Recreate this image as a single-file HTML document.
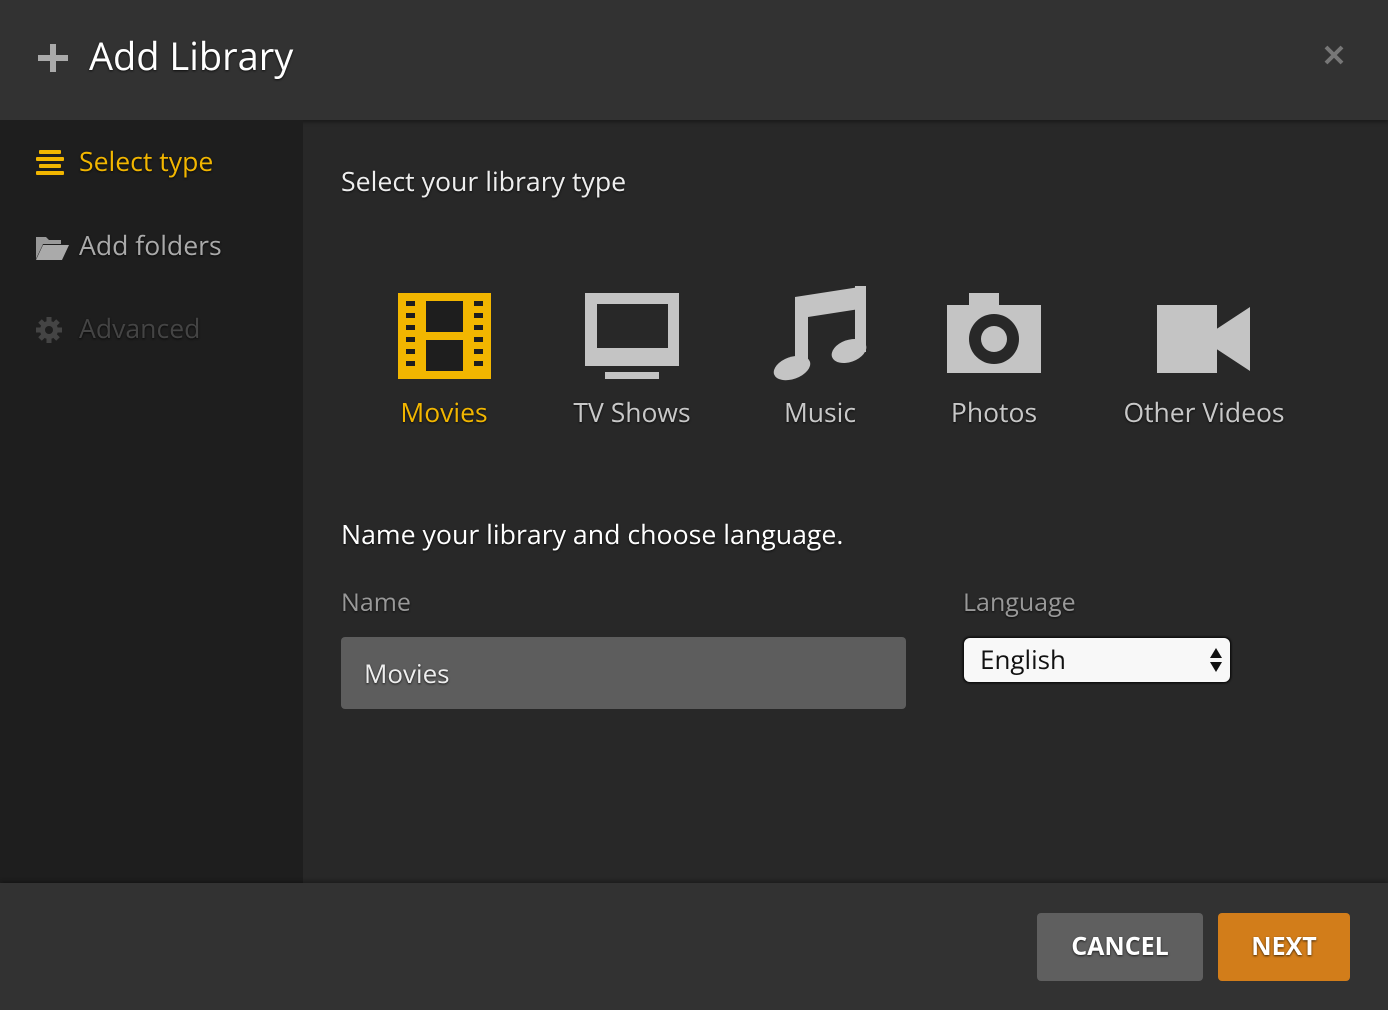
<!DOCTYPE html>
<html><head><meta charset="utf-8"><style>
*{margin:0;padding:0;box-sizing:border-box}
body{width:1388px;height:1010px;background:#282828;font-family:"Open Sans","DejaVu Sans","Liberation Sans",sans-serif;position:relative;overflow:hidden;text-shadow:0 1px 2px rgba(0,0,0,.7)}
.a{position:absolute;white-space:nowrap;line-height:1}
#hdr{position:absolute;left:0;top:0;width:1388px;height:120px;background:#323232;box-shadow:0 2px 4px rgba(0,0,0,.4)}
#side{position:absolute;left:0;top:120px;width:303px;height:763px;background:#1e1e1e}
#ftr{position:absolute;left:0;top:883px;width:1388px;height:127px;background:#323232;box-shadow:0 -2px 4px rgba(0,0,0,.3)}
.lbl{position:absolute;top:399px;font-size:26.5px;color:#c8c8c8;transform:translateX(-50%);white-space:nowrap;line-height:1}
svg{position:absolute}
</style></head><body>
<div id="hdr"></div><div id="side"></div><div id="ftr"></div>
<svg style="left:38px;top:44px" width="30" height="28"><rect x="12" y="0" width="6" height="28" fill="#aaa"/><rect x="0" y="11" width="30" height="6" fill="#aaa"/></svg>
<div class="a" style="left:89px;top:37px;font-size:38px;color:#fff">Add Library</div>
<svg style="left:1324px;top:45px" width="20" height="20"><path d="M2 2L18 18M18 2L2 18" stroke="#777" stroke-width="4"/></svg>

<svg style="left:36px;top:150px" width="28" height="26"><g fill="#f2b600"><rect x="3" y="0" width="22" height="4" rx="1"/><rect x="0" y="7" width="28" height="4" rx="1"/><rect x="3" y="14" width="22" height="4" rx="1"/><rect x="0" y="21" width="28" height="4" rx="1"/></g></svg>
<div class="a" style="left:79px;top:148px;font-size:26.6px;color:#f2b600">Select type</div>
<svg style="left:35px;top:233px" width="34" height="28"><path d="M1 4h10l3 3h12v4H8L1 26z" fill="#999"/><path d="M8 12h26l-7 15H1z" fill="#aaa"/></svg>
<div class="a" style="left:79px;top:232px;font-size:26.6px;color:#aaa">Add folders</div>
<svg style="left:35px;top:316px" width="28" height="28"><g fill="#444"><circle cx="14" cy="14" r="9"/><g stroke="#444" stroke-width="5"><path d="M14 1v26M1 14h26M5 5l18 18M23 5L5 23"/></g></g><circle cx="14" cy="14" r="4" fill="#1e1e1e"/></svg>
<div class="a" style="left:79px;top:315px;font-size:26.6px;color:#444">Advanced</div>

<div class="a" style="left:341px;top:168px;font-size:26.7px;color:#eee">Select your library type</div>

<svg style="left:398px;top:293px" width="93" height="86"><rect width="93" height="86" fill="#f2b600"/><g fill="#1e1e1e"><rect x="28" y="8" width="37" height="31"/><rect x="28" y="47" width="37" height="31"/><rect x="8" y="8" width="9" height="5"/><rect x="8" y="20" width="9" height="5"/><rect x="8" y="32" width="9" height="5"/><rect x="8" y="44" width="9" height="5"/><rect x="8" y="56" width="9" height="5"/><rect x="8" y="68" width="9" height="5"/><rect x="76" y="8" width="9" height="5"/><rect x="76" y="20" width="9" height="5"/><rect x="76" y="32" width="9" height="5"/><rect x="76" y="44" width="9" height="5"/><rect x="76" y="56" width="9" height="5"/><rect x="76" y="68" width="9" height="5"/></g></svg>
<svg style="left:585px;top:293px" width="94" height="86"><rect width="94" height="73" fill="#c4c4c4"/><rect x="12" y="11" width="71" height="44" fill="#282828"/><rect x="20" y="79" width="54" height="7" fill="#c4c4c4"/></svg>
<svg style="left:773px;top:286px" width="96" height="96"><g fill="#c4c4c4"><path d="M22 11L93 0V22L35 31Z"/><rect x="22" y="11" width="13" height="72"/><rect x="82" y="0" width="11" height="66"/><ellipse cx="19" cy="82" rx="19" ry="11" transform="rotate(-20 19 82)"/><ellipse cx="76" cy="65" rx="18" ry="11" transform="rotate(-20 76 65)"/></g></svg>
<svg style="left:947px;top:293px" width="94" height="80"><path d="M22 0h30v12h42v68H0V12h22z" fill="#c4c4c4"/><circle cx="47" cy="46" r="25" fill="#282828"/><circle cx="47" cy="46" r="13" fill="#c4c4c4"/></svg>
<svg style="left:1157px;top:305px" width="94" height="68"><rect width="60" height="68" fill="#c4c4c4"/><path d="M58 25L93 2V66L58 43z" fill="#c4c4c4"/></svg>

<div class="lbl" style="left:444px;color:#f2b600">Movies</div>
<div class="lbl" style="left:632px">TV Shows</div>
<div class="lbl" style="left:820px">Music</div>
<div class="lbl" style="left:994px">Photos</div>
<div class="lbl" style="left:1204px">Other Videos</div>

<div class="a" style="left:341px;top:521px;font-size:26.7px;color:#fff">Name your library and choose language.</div>
<div class="a" style="left:341px;top:590px;font-size:25px;color:#999">Name</div>
<div class="a" style="left:963px;top:590px;font-size:25px;color:#999">Language</div>
<div style="position:absolute;left:341px;top:637px;width:565px;height:72px;background:#5d5d5d;border-radius:4px"></div>
<div class="a" style="left:364px;top:660px;font-size:26px;color:#eee">Movies</div>
<div style="position:absolute;left:963px;top:637px;width:268px;height:46px;background:#f8f8f8;border-radius:7px;border:1px solid #111;box-shadow:0 0 2px #000"></div>
<div class="a" style="left:980px;top:646px;font-size:26px;color:#111;text-shadow:none">English</div>
<svg style="left:1209px;top:647px" width="14" height="26"><path d="M7 1L13 11H1zM7 25L13 15H1z" fill="#111"/></svg>

<div style="position:absolute;left:1037px;top:913px;width:166px;height:68px;background:#5f5f5f;border-radius:4px"></div>
<div class="a" style="left:1120px;top:934px;transform:translateX(-50%);font-size:25px;font-weight:bold;color:#fff">CANCEL</div>
<div style="position:absolute;left:1218px;top:913px;width:132px;height:68px;background:#d27d1a;border-radius:4px"></div>
<div class="a" style="left:1284px;top:934px;transform:translateX(-50%);font-size:25px;font-weight:bold;color:#fff">NEXT</div>
</body></html>
